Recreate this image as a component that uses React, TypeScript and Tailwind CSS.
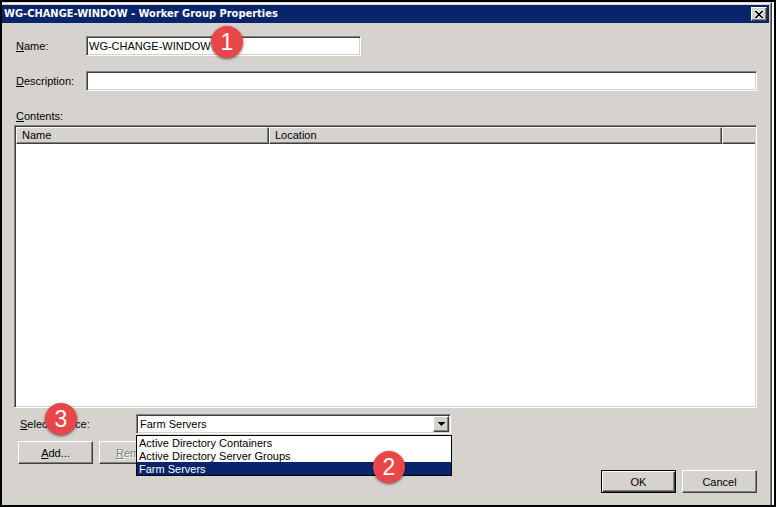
import React, { useState } from 'react';
import clsx from 'clsx';

const sunken =
  'border border-t-[#808080] border-l-[#808080] border-r-white border-b-white shadow-[inset_1px_1px_#404040,inset_-1px_-1px_#d6d3ce]';
const raised =
  'border border-t-white border-l-white border-r-[#404040] border-b-[#404040] shadow-[inset_-1px_-1px_#808080]';
const raisedDefault =
  'border border-black shadow-[inset_1px_1px_#fff,inset_-1px_-1px_#404040,inset_-2px_-2px_#808080]';

const sources = [
  'Active Directory Containers',
  'Active Directory Server Groups',
  'Farm Servers',
];

function Callout({ className, children }: { className: string; children: React.ReactNode }) {
  return (
    <span
      className={clsx(
        'absolute z-20 flex h-8 w-8 items-center justify-center rounded-full bg-[#e94649] text-[23px] leading-8 text-white shadow-[0_1px_3px_rgba(0,0,0,0.6)]',
        className
      )}
    >
      {children}
    </span>
  );
}

function DialogButton({
  isDefault,
  disabled,
  children,
}: {
  isDefault?: boolean;
  disabled?: boolean;
  children: React.ReactNode;
}) {
  return (
    <button
      type={isDefault ? 'submit' : 'button'}
      disabled={disabled}
      className={clsx(
        'h-[23px] w-[75px] bg-[#d6d3ce] disabled:text-[#808080] disabled:[text-shadow:1px_1px_#fff]',
        isDefault ? raisedDefault : raised
      )}
    >
      {children}
    </button>
  );
}

export default function App() {
  const [name, setName] = useState('WG-CHANGE-WINDOW');
  const [description, setDescription] = useState('');
  const [source, setSource] = useState('Farm Servers');

  return (
    <div className="flex min-h-screen border-2 border-black bg-white pr-0.5 font-['Liberation_Sans',Arial,sans-serif] text-[11px] leading-4 text-black">
      <div className="flex flex-1 border-t border-r border-t-[#d6d3ce] border-r-[#404040]">
        <div className="flex flex-1 flex-col border-t border-r border-t-white border-r-[#808080] bg-[#d6d3ce] pt-px pr-px">
          <header className="flex h-[18px] items-center justify-between bg-[#08246b] px-0.5 text-white">
            <h1 className="font-['DejaVu_Sans_Condensed','DejaVu_Sans',sans-serif] text-[11px] font-bold">
              WG-CHANGE-WINDOW - Worker Group Properties
            </h1>
            <button
              type="button"
              aria-label="Close"
              className={clsx('flex h-3.5 w-4 items-center justify-center bg-[#d6d3ce] text-black', raised)}
            >
              <svg width="8" height="7" viewBox="0 0 8 7" shapeRendering="crispEdges">
                <path
                  d="M0 0h2v1h1v1h2v-1h1v-1h2v1h-1v1h-1v1h-1v1h1v1h1v1h1v1h-2v-1h-1v-1h-2v1h-1v1h-2v-1h1v-1h1v-1h1v-1h-1v-1h-1v-1h-1z"
                  fill="currentColor"
                />
              </svg>
            </button>
          </header>

          <form className="flex flex-1 flex-col px-3 pt-[13px] pb-3" onSubmit={(e) => e.preventDefault()}>
            <div className="flex items-center pl-0.5">
              <label htmlFor="name" className="w-[70px]">
                <u>N</u>ame:
              </label>
              <div className="relative w-[275px]">
                <input
                  id="name"
                  value={name}
                  onChange={(e) => setName(e.target.value)}
                  className={clsx('block h-5 w-full bg-white px-0.5', sunken)}
                />
                <Callout className="-top-2.5 left-[125px]">1</Callout>
              </div>
            </div>

            <div className="mt-[15px] flex items-center pl-0.5">
              <label htmlFor="description" className="w-[70px]">
                <u>D</u>escription:
              </label>
              <input
                id="description"
                value={description}
                onChange={(e) => setDescription(e.target.value)}
                className={clsx('block h-5 flex-1 bg-white px-0.5', sunken)}
              />
            </div>

            <h2 id="contents" className="mt-[17px] mb-px pl-0.5">
              <u>C</u>ontents:
            </h2>
            <div className={clsx('flex-1 bg-white p-px', sunken)}>
              <table aria-labelledby="contents" className="w-full table-fixed border-separate border-spacing-0 text-left">
                <thead>
                  <tr className="bg-[#d6d3ce]">
                    <th className={clsx('h-[17px] w-[253px] p-0 pl-[5px] font-normal leading-[15px]', raised)}>Name</th>
                    <th className={clsx('p-0 pl-[5px] font-normal leading-[15px]', raised)}>Location</th>
                    <th className="w-[33px] border border-t-white border-r-0 border-b-[#404040] border-l-white p-0 shadow-[inset_0_-1px_#808080]" />
                  </tr>
                </thead>
                <tbody />
              </table>
            </div>

            <div className="mt-1.5 flex items-center pl-1.5">
              <div className="relative w-[116px]">
                <label htmlFor="source">
                  <u>S</u>elect source:
                </label>
                <Callout className="-top-[13px] left-[25px]">3</Callout>
              </div>
              <div className="relative w-[315px]">
                <select
                  id="source"
                  value={source}
                  onChange={(e) => setSource(e.target.value)}
                  className={clsx('block h-5 w-full appearance-none bg-white px-[3px]', sunken)}
                >
                  {sources.map((item) => (
                    <option key={item}>{item}</option>
                  ))}
                </select>
                <span
                  className={clsx(
                    'pointer-events-none absolute top-0.5 right-0.5 flex h-4 w-4 items-center justify-center bg-[#d6d3ce]',
                    raised
                  )}
                >
                  <svg width="7" height="4" viewBox="0 0 7 4" shapeRendering="crispEdges">
                    <path d="M0 0h7v1h-1v1h-1v1h-1v1h-1v-1h-1v-1h-1v-1h-1z" />
                  </svg>
                </span>
                <ul
                  role="listbox"
                  className="absolute top-[21px] left-0 z-10 w-[316px] border border-black bg-white leading-[15px]"
                >
                  {sources.map((item) => (
                    <li
                      key={item}
                      role="option"
                      aria-selected={item === source}
                      onClick={() => setSource(item)}
                      className="h-[13px] pl-0.5 aria-selected:bg-[#08246b] aria-selected:text-white"
                    >
                      {item}
                    </li>
                  ))}
                </ul>
                <Callout className="top-[37px] left-[237px]">2</Callout>
              </div>
            </div>

            <div className="mt-[7px] flex gap-1.5 pl-1">
              <DialogButton>
                <u>A</u>dd...
              </DialogButton>
              <DialogButton disabled>
                <u>R</u>emove
              </DialogButton>
            </div>

            <div className="mt-1.5 flex justify-end gap-1.5">
              <DialogButton isDefault>OK</DialogButton>
              <DialogButton>Cancel</DialogButton>
            </div>
          </form>
        </div>
      </div>
    </div>
  );
}
